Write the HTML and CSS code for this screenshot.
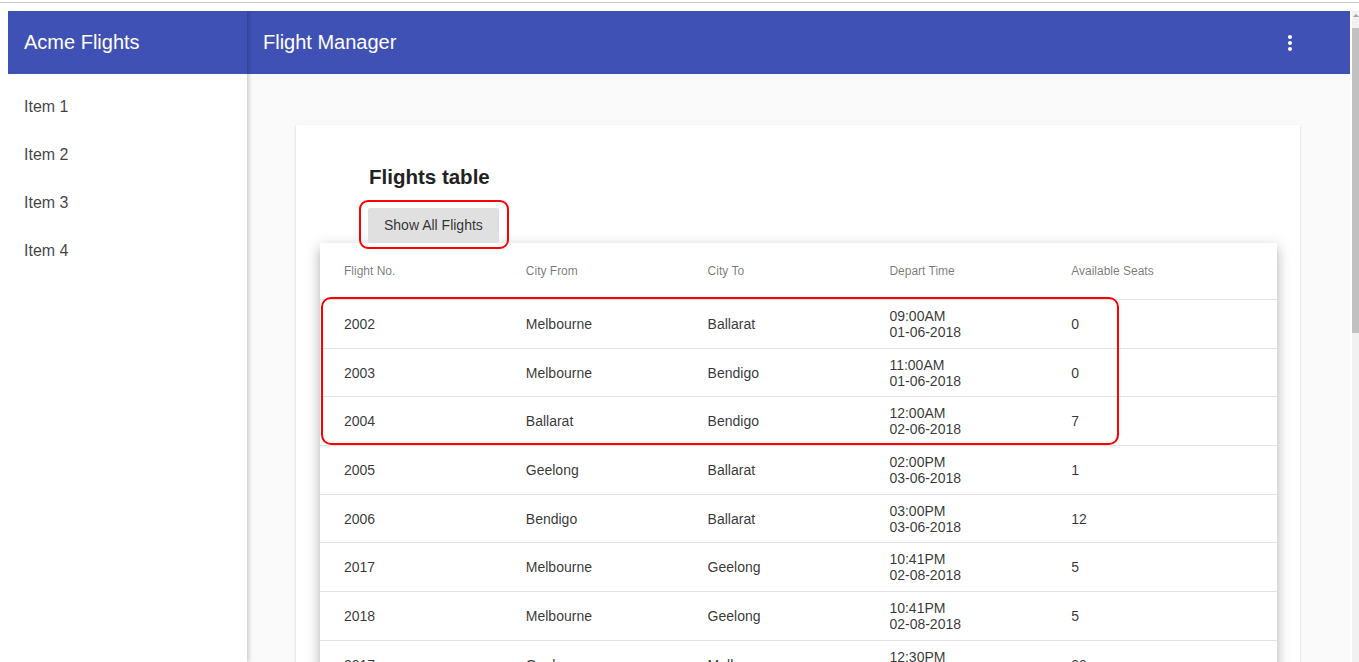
FILE: index.html
```html
<!DOCTYPE html>
<html lang="en">
<head>
<meta charset="utf-8">
<title>Flight Manager</title>
<link rel="stylesheet" href="styles.css">
</head>
<body>
<div class="chrome"></div>
<div class="frame">
  <div class="app">
    <aside class="sidebar">
      <div class="sidebar-head">Acme Flights</div>
      <ul class="nav">
        <li>Item 1</li>
        <li>Item 2</li>
        <li>Item 3</li>
        <li>Item 4</li>
      </ul>
    </aside>
    <div class="main">
      <header class="main-head">
        <span class="title">Flight Manager</span>
        <button class="icon-btn" aria-label="More">
          <svg width="24" height="24" viewBox="0 0 24 24"><path fill="#fff" d="M12 8c1.1 0 2-.9 2-2s-.9-2-2-2-2 .9-2 2 .9 2 2 2zm0 2c-1.1 0-2 .9-2 2s.9 2 2 2 2-.9 2-2-.9-2-2-2zm0 6c-1.1 0-2 .9-2 2s.9 2 2 2 2-.9 2-2-.9-2-2-2z"/></svg>
        </button>
      </header>
      <div class="content">
        <section class="card">
          <div class="intro">
            <h2 class="heading">Flights table</h2>
            <div class="btn-wrap">
              <button class="btn">Show All Flights</button>
              <span class="mark mark-btn"></span>
            </div>
          </div>
          <div class="table">
            <div class="row head">
              <div>Flight No.</div><div>City From</div><div>City To</div><div>Depart Time</div><div>Available Seats</div>
            </div>
            <div class="row"><div>2002</div><div>Melbourne</div><div>Ballarat</div><div>09:00AM<br>01-06-2018</div><div>0</div></div>
            <div class="row"><div>2003</div><div>Melbourne</div><div>Bendigo</div><div>11:00AM<br>01-06-2018</div><div>0</div></div>
            <div class="row"><div>2004</div><div>Ballarat</div><div>Bendigo</div><div>12:00AM<br>02-06-2018</div><div>7</div></div>
            <div class="row"><div>2005</div><div>Geelong</div><div>Ballarat</div><div>02:00PM<br>03-06-2018</div><div>1</div></div>
            <div class="row"><div>2006</div><div>Bendigo</div><div>Ballarat</div><div>03:00PM<br>03-06-2018</div><div>12</div></div>
            <div class="row"><div>2017</div><div>Melbourne</div><div>Geelong</div><div>10:41PM<br>02-08-2018</div><div>5</div></div>
            <div class="row"><div>2018</div><div>Melbourne</div><div>Geelong</div><div>10:41PM<br>02-08-2018</div><div>5</div></div>
            <div class="row"><div>2017</div><div>Geelong</div><div>Melbourne</div><div>12:30PM<br>03-08-2018</div><div>20</div></div>
            <div class="row"><div>2019</div><div>Ballarat</div><div>Geelong</div><div>01:30PM<br>04-08-2018</div><div>9</div></div>
            <span class="mark mark-rows"></span>
          </div>
        </section>
      </div>
    </div>
  </div>
  <div class="scrollbar">
    <span class="arrow"></span>
    <span class="thumb"></span>
  </div>
</div>
</body>
</html>
```

FILE: styles.css
```css
* { box-sizing: border-box; }

html, body {
  margin: 0;
  height: 100%;
  overflow: hidden;
  background: #fff;
  font-family: "Liberation Sans", Arial, sans-serif;
}

.chrome {
  height: 3px;
  border-bottom: 1px solid #c6c6c6;
  margin-bottom: 8px;
}

.frame {
  display: flex;
  height: 651px;
  padding-left: 8px;
}

.app {
  width: 1342px;
  display: flex;
  overflow: hidden;
}

.sidebar {
  width: 239px;
  flex: none;
  background: #fff;
  position: relative;
  z-index: 2;
  box-shadow: 2px 0 4px rgba(0, 0, 0, 0.18);
}

.sidebar-head {
  height: 63px;
  background: #3f51b5;
  color: #fff;
  font-size: 20px;
  display: flex;
  align-items: center;
  padding-left: 16px;
}

.nav {
  list-style: none;
  margin: 0;
  padding: 8px 0 0;
}

.nav li {
  height: 48px;
  line-height: 49px;
  padding-left: 16px;
  font-size: 16px;
  color: rgba(0, 0, 0, 0.75);
}

.main {
  flex: 1;
  background: #fafafa;
  display: flex;
  flex-direction: column;
  min-width: 0;
}

.main-head {
  height: 63px;
  flex: none;
  background: #3f51b5;
  color: #fff;
  display: flex;
  align-items: center;
  justify-content: space-between;
  padding: 0 40px 0 16px;
}

.title { font-size: 20px; }

.icon-btn {
  width: 40px;
  height: 40px;
  border: 0;
  padding: 0;
  background: transparent;
  display: flex;
  align-items: center;
  justify-content: center;
}

.content {
  flex: 1;
  padding: 51px 50px 0 49px;
  overflow: hidden;
}

.card {
  background: #fff;
  padding: 24px 23px 24px 24px;
  box-shadow: 0 2px 1px -1px rgba(0,0,0,.2), 0 1px 1px 0 rgba(0,0,0,.14), 0 1px 3px 0 rgba(0,0,0,.12);
}

.intro {
  padding-left: 48px;
}

.heading {
  margin: 16px 0 19px 1px;
  font-size: 20.5px;
  line-height: 24px;
  font-weight: bold;
  color: #222;
}

.btn-wrap {
  position: relative;
  z-index: 3;
  display: inline-block;
  vertical-align: top;
}

.btn {
  display: block;
  height: 35px;
  padding: 0 16px;
  border: 0;
  border-radius: 2px;
  background: #e0e0e0;
  color: rgba(0, 0, 0, 0.8);
  font-family: inherit;
  font-size: 14px;
  line-height: 33px;
}

.mark {
  position: absolute;
  z-index: 5;
  border: 2px solid #f00;
  pointer-events: none;
}

.mark-btn {
  left: -9px;
  top: -8px;
  width: 150px;
  height: 49px;
  border-radius: 9px;
}

.table {
  position: relative;
  background: #fff;
  box-shadow: 0 5px 5px -3px rgba(0,0,0,.2), 0 8px 10px 1px rgba(0,0,0,.14), 0 3px 14px 2px rgba(0,0,0,.12);
}

.row {
  display: grid;
  grid-template-columns: repeat(5, 1fr);
  align-items: center;
  padding: 0 24px;
  height: 48.7px;
  border-bottom: 1px solid #e3e3e3;
  font-size: 14px;
  line-height: 16px;
  color: rgba(0, 0, 0, 0.8);
}

.row.head {
  height: 57px;
  font-size: 12px;
  color: rgba(0, 0, 0, 0.54);
}

.mark-rows {
  left: 1px;
  top: 54px;
  width: 798px;
  height: 148px;
  border-radius: 10px;
}

.scrollbar {
  position: relative;
  width: 7px;
  margin-left: 2px;
  background: #f1f1f1;
}

.arrow {
  position: absolute;
  left: 1px;
  top: 3px;
  width: 0;
  height: 0;
  border-left: 3px solid transparent;
  border-right: 3px solid transparent;
  border-bottom: 3px solid #a3a3a3;
}

.thumb {
  position: absolute;
  left: 0;
  right: 0;
  top: 17px;
  height: 305px;
  background: #c1c1c1;
}
```
